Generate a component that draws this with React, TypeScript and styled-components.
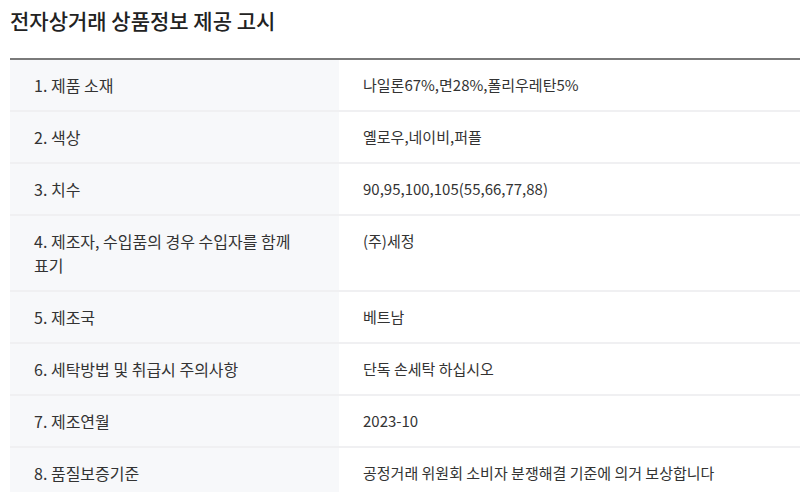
import styled, { createGlobalStyle } from 'styled-components'

const GlobalStyle = createGlobalStyle`
  body {
    margin: 0;
    background: #fff;
    font-family: "Noto Sans CJK KR", "Noto Sans", sans-serif;
    color: #333;
  }
`

const Section = styled.section`
  padding: 5px 0 0 10px;
  overflow: hidden;
`

const Title = styled.h2`
  margin: 0 0 22px;
  font-size: 21px;
  line-height: 31px;
  font-weight: 500;
  color: #222;
`

const Table = styled.div`
  border-top: 2px solid #7a7a7a;
  width: 800px;
`

const Row = styled.div`
  display: grid;
  grid-template-columns: 329px 1fr;
  border-bottom: 2px solid #f0f0f2;
`

const Cell = styled.div`
  padding: 13px 24px;
  font-size: 15px;
  line-height: 24px;
  color: #333;
  background: #fff;
  word-break: keep-all;
`

const LabelCell = styled(Cell)`
  padding-right: 30px;
  font-size: 16px;
  background: #f7f8fa;
`

const rows = [
  ['1. 제품 소재', '나일론67%,면28%,폴리우레탄5%'],
  ['2. 색상', '옐로우,네이비,퍼플'],
  ['3. 치수', '90,95,100,105(55,66,77,88)'],
  ['4. 제조자, 수입품의 경우 수입자를 함께 표기', '(주)세정'],
  ['5. 제조국', '베트남'],
  ['6. 세탁방법 및 취급시 주의사항', '단독 손세탁 하십시오'],
  ['7. 제조연월', '2023-10'],
  ['8. 품질보증기준', '공정거래 위원회 소비자 분쟁해결 기준에 의거 보상합니다'],
]

export default function App() {
  return (
    <>
      <GlobalStyle />
      <Section>
        <Title>전자상거래 상품정보 제공 고시</Title>
        <Table>
          {rows.map(([label, value]) => (
            <Row key={label}>
              <LabelCell>{label}</LabelCell>
              <Cell>{value}</Cell>
            </Row>
          ))}
        </Table>
      </Section>
    </>
  )
}
